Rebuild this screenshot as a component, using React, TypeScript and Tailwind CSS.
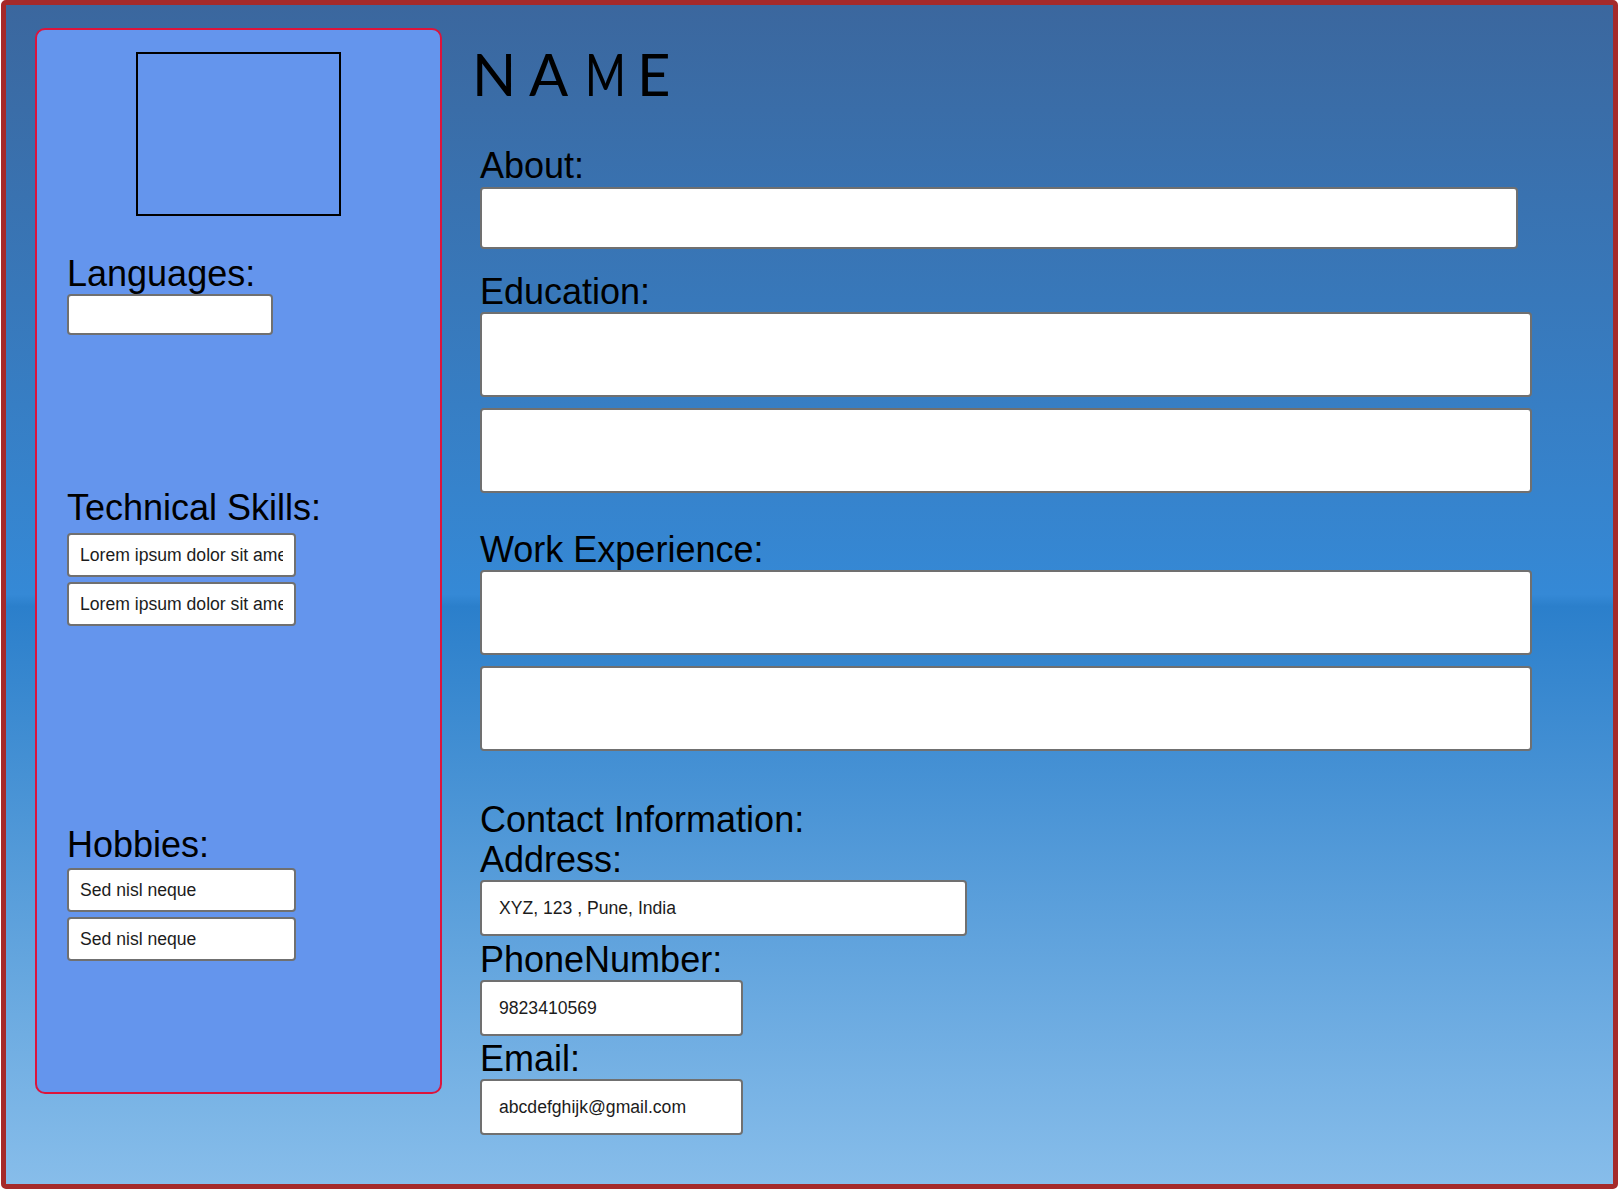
import { FC } from "react";

type FieldProps = {
  value?: string;
  className: string;
};

// plain text box; value is shown read-only like in the filled resume
const Field: FC<FieldProps> = ({ value = "", className }) => (
  <input
    readOnly
    value={value}
    className={`block bg-white border-2 border-[#707070] rounded-[4px] text-[17.6px] text-[#1c1c1c] outline-none font-['Liberation_Sans',Arial,sans-serif] ${className}`}
  />
);

const Label: FC<{ text: string; className?: string }> = ({ text, className = "" }) => (
  <div className={`text-[36px] leading-[40px] text-black ${className}`}>{text}</div>
);

const Sidebar: FC = () => (
  <aside className="ml-[29px] mt-[23px] w-[407px] h-[1066px] shrink-0 border-2 border-[#dc143c] rounded-[10px] bg-[#6495ed] px-[30px] flex flex-col">
    <div className="self-center mt-[22px] w-[205px] h-[164px] border-2 border-black" />

    <Label text="Languages:" className="mt-[38px]" />
    <Field className="w-[206px] h-[41px] px-[11px]" />

    <Label text="Technical Skills:" className="mt-[153px]" />
    <Field value="Lorem ipsum dolor sit amet, consectetur" className="mt-[5px] w-[229px] h-[44px] px-[11px]" />
    <Field value="Lorem ipsum dolor sit amet, consectetur" className="mt-[5px] w-[229px] h-[44px] px-[11px]" />

    <Label text="Hobbies:" className="mt-[199px]" />
    <Field value="Sed nisl neque" className="mt-[3px] w-[229px] h-[44px] px-[11px]" />
    <Field value="Sed nisl neque" className="mt-[5px] w-[229px] h-[44px] px-[11px]" />
  </aside>
);

const Main: FC = () => (
  <main className="ml-[38px] mt-[40px] flex flex-col">
    <h1 className="flex text-[58px] leading-none font-normal text-black font-['Lato',sans-serif] -ml-[8px]">
      <span className="w-[57px]">N</span>
      <span className="w-[56px]">A</span>
      <span className="w-[52px] inline-block origin-left scale-x-[0.76]">M</span>
      <span>E</span>
    </h1>

    <Label text="About:" className="mt-[43px]" />
    <Field className="mt-[1px] w-[1038px] h-[62px]" />

    <Label text="Education:" className="mt-[23px]" />
    <Field className="w-[1052px] h-[85px]" />
    <Field className="mt-[11px] w-[1052px] h-[85px]" />

    <Label text="Work Experience:" className="mt-[37px]" />
    <Field className="w-[1052px] h-[85px]" />
    <Field className="mt-[11px] w-[1052px] h-[85px]" />

    <Label text="Contact Information:" className="mt-[49px]" />
    <Label text="Address:" />
    <Field value="XYZ, 123 , Pune, India" className="w-[487px] h-[56px] px-[17px]" />
    <Label text="PhoneNumber:" className="mt-[4px]" />
    <Field value="9823410569" className="w-[263px] h-[56px] px-[17px]" />
    <Label text="Email:" className="mt-[3px]" />
    <Field value="abcdefghijk@gmail.com" className="w-[263px] h-[56px] px-[17px]" />
  </main>
);

export default function App() {
  return (
    <div className="ml-px w-[1617px] h-[1189px] border-[5px] border-[#a52a2a] rounded-[5px] bg-[linear-gradient(to_bottom,#3b679e_0%,#3589d6_50%,#2b7fcb_51%,#87bdea_100%)] flex items-start font-['Liberation_Sans',Arial,sans-serif]">
      <Sidebar />
      <Main />
    </div>
  );
}
